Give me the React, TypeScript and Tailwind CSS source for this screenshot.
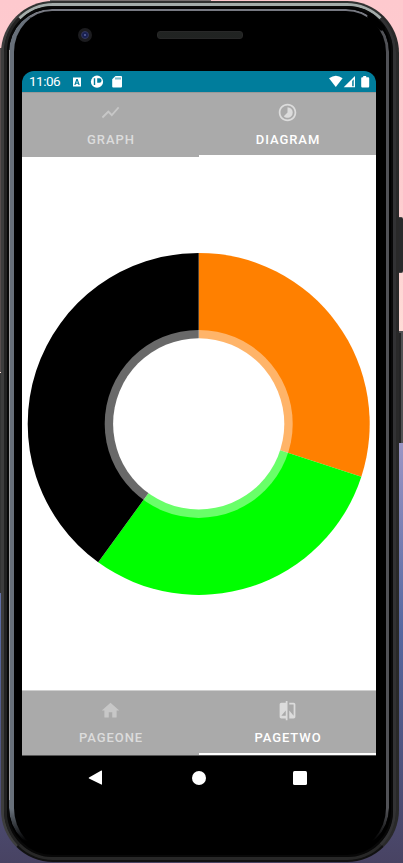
import React from "react";
import { MdShowChart, MdTimelapse, MdHome, MdCompare } from "react-icons/md";

type TabProps = { icon: React.ReactNode; label: string; active?: boolean };

function Tab({ icon, label, active }: TabProps) {
  return (
    <div
      className={`flex w-[177px] flex-col items-center border-b-2 pt-[9px] ${
        active ? "border-white text-white" : "border-[#aaaaaa] text-[#dcdcdc]"
      }`}
    >
      <div className={`text-[21px] ${active ? "text-[#dcdcdc]" : "text-[#c7c7c7]"}`}>{icon}</div>
      <span className="mt-[8px] pl-px text-[13px] leading-[18px] font-medium tracking-[0.95px]">{label}</span>
    </div>
  );
}

function StatusBar() {
  return (
    <div className="flex h-[21px] shrink-0 items-center rounded-t-[12px] bg-[#007d9c] pl-[7px] text-white">
      <span className="w-[42px] text-[13.5px] leading-[21px] tracking-[-0.5px]">11:06</span>
      <svg className="h-[21px] w-[60px]" viewBox="71 71 60 21" fill="white">
        <path fillRule="evenodd" d="M73 77.5h8v9h-8zM76.3 79l-2 6h1.2l.4-1.2h2.2l.4 1.2h1.2l-2-6zm.7 1.7.7 2h-1.4z" />
        <circle cx="97" cy="81.7" r="6.1" />
        <path d="M93.8 78.3h1.4v6.8h-1.4zM97.2 78.3h2.2a2.2 2.2 0 0 1 0 4.4h-2.2z" fill="#007d9c" />
        <path d="M115.5 76H121q1 0 1 1v9.5q0 1-1 1h-7.8q-1 0-1-1V79.3z" />
        <path d="M115.5 77.5h1v2h-1zm2 0h1v2h-1zm2 0h1v2h-1z" fill="#007d9c" />
      </svg>
      <svg className="ml-auto h-[21px] w-[50px]" viewBox="326 71 50 21" fill="white">
        <path d="M329 78.3q7-5.2 13.6 0L335.8 87z" />
        <path fillRule="evenodd" d="M355 76v11.3h-11.3zm-2.8 5v5.2h1.5v-7z" />
        <path d="M363.2 76h3v1.2h2q1 0 1 1v8q0 1.2-1 1.2h-6q-1 0-1-1.2v-8q0-1 1-1h1z" />
      </svg>
    </div>
  );
}

function Donut() {
  return (
    <svg className="h-[344px] w-[354px]" viewBox="-176.7 -171.9 354 344">
      <path d="M0 0V-171A171 171 0 0 1 162.63 52.84Z" fill="#ff8000" />
      <path d="M0 0L162.63 52.84A171 171 0 0 1 -100.51 138.34Z" fill="#00ff00" />
      <path d="M0 0L-100.51 138.34A171 171 0 0 1 0 -171Z" fill="#000" />
      <circle r="94" fill="white" fillOpacity=".412" />
      <circle r="85.6" fill="white" />
    </svg>
  );
}

function Casing() {
  return (
    <div className="absolute inset-0">
      <div className="absolute top-0 left-0 h-[400px] w-[403px] bg-linear-to-b from-[#fec9ce] via-[#fdcdd0] to-[#ffe4db]" />
      <div className="absolute top-[400px] left-0 h-[463px] w-[403px] bg-linear-to-b from-[#aaa0cd] via-[#5667a0] to-[#484363]" />
      <div className="absolute top-[48px] left-0 h-[324px] w-[2px] bg-[#564d4d]" />
      <div className="absolute top-[373px] left-0 h-[220px] w-[2px] bg-[#343434]" />
      <div className="absolute top-0 left-[50px] h-[4px] w-[161px] bg-[#777070]" />
      <div className="absolute top-[217px] left-[397px] h-[56px] w-[6px] rounded-r-[2px] border-y border-[#454545] bg-[#29292b]" />
      <div className="absolute top-[331px] left-[397px] h-[112px] w-[6px] border-t-2 border-r-2 border-[#515153] bg-[#242425]" />
      <div className="absolute top-[1px] left-[1px] h-[861px] w-[398px] rounded-[52px] border-[3px] border-t-2 border-t-[#303130] border-r-[#292929] border-b-[#111] border-l-[#3d3d3d] bg-[#151515]" />
      <div className="absolute top-[3px] left-[4px] h-[857px] w-[392px] rounded-[49px] border-x-[3px] border-t-[3px] border-b-[3px] border-t-[#a4acaa] border-r-[#323234] border-b-[#272727] border-l-[#222]" />
      <div className="absolute top-[6px] left-[7px] h-[851px] w-[386px] rounded-[46px] border-2 border-[#080808] bg-black" />
      <div className="absolute top-[9px] left-[9px] h-[842px] w-[380px] rounded-[43px] border-t-[2px] border-r-[3px] border-l-[5px] border-t-[#777982] border-r-[#515257] border-l-[#68707a] bg-black mask-[linear-gradient(to_bottom,black_800px,transparent_832px)]" />
      <div className="absolute top-[50px] left-[9px] h-[750px] w-px bg-[#a0a1a3]" />
      <div className="absolute top-[19px] left-[365px] h-[6px] w-[22px] rotate-45 rounded-full bg-black" />
      <div className="absolute top-[28px] left-[78px] size-[14px] rounded-full bg-[#1c1c1f]">
        <div className="absolute top-[3px] left-[3px] size-[8px] rounded-full border border-[#34375a] bg-[#182052]" />
        <div className="absolute top-[6px] left-[6px] size-[2px] rounded-full bg-[#5c669d]" />
      </div>
      <div className="absolute top-[31px] left-[157px] h-[8px] w-[86px] rounded-[3px] border border-[#282828] bg-[radial-gradient(#292c2a_35%,#181a19_65%)] bg-size-[2px_2px]" />
    </div>
  );
}

export default function App() {
  return (
    <div className="relative h-[863px] w-[403px] overflow-hidden bg-black font-['Roboto',sans-serif]">
      <Casing />
      <div className="relative flex h-full flex-col pt-[71px] pr-[27px] pl-[22px]">
        <StatusBar />
        <div className="flex h-[65px] bg-white">
          <div className="flex h-full w-[177px] border-t border-[#999] bg-[#aaaaaa]">
            <Tab icon={<MdShowChart />} label="GRAPH" />
          </div>
          <div className="flex h-[65px] w-[177px] border-t border-[#999] bg-[#aaaaaa]">
            <Tab icon={<MdTimelapse />} label="DIAGRAM" active />
          </div>
        </div>
        <main className="flex h-[533px] items-center justify-center bg-white">
          <Donut />
        </main>
        <div className="flex h-[66px] border-t border-b border-t-[#cfcfcf] border-b-[#555] bg-[#aaaaaa]">
          <Tab icon={<MdHome />} label="PAGEONE" />
          <Tab icon={<MdCompare />} label="PAGETWO" active />
        </div>
        <nav className="flex h-[43px] items-center pl-[66px]">
          <svg className="h-[16px] w-[15px]" viewBox="0 0 15 16" fill="white">
            <path d="M1 7.4 13.3.6q.7-.3.7.5v13q0 .8-.7.5L1 8.4q-.7-.5 0-1z" />
          </svg>
          <div className="ml-[89px] size-[14px] rounded-full bg-white" />
          <div className="ml-[87px] size-[14px] rounded-[1.5px] bg-white" />
        </nav>
      </div>
    </div>
  );
}
